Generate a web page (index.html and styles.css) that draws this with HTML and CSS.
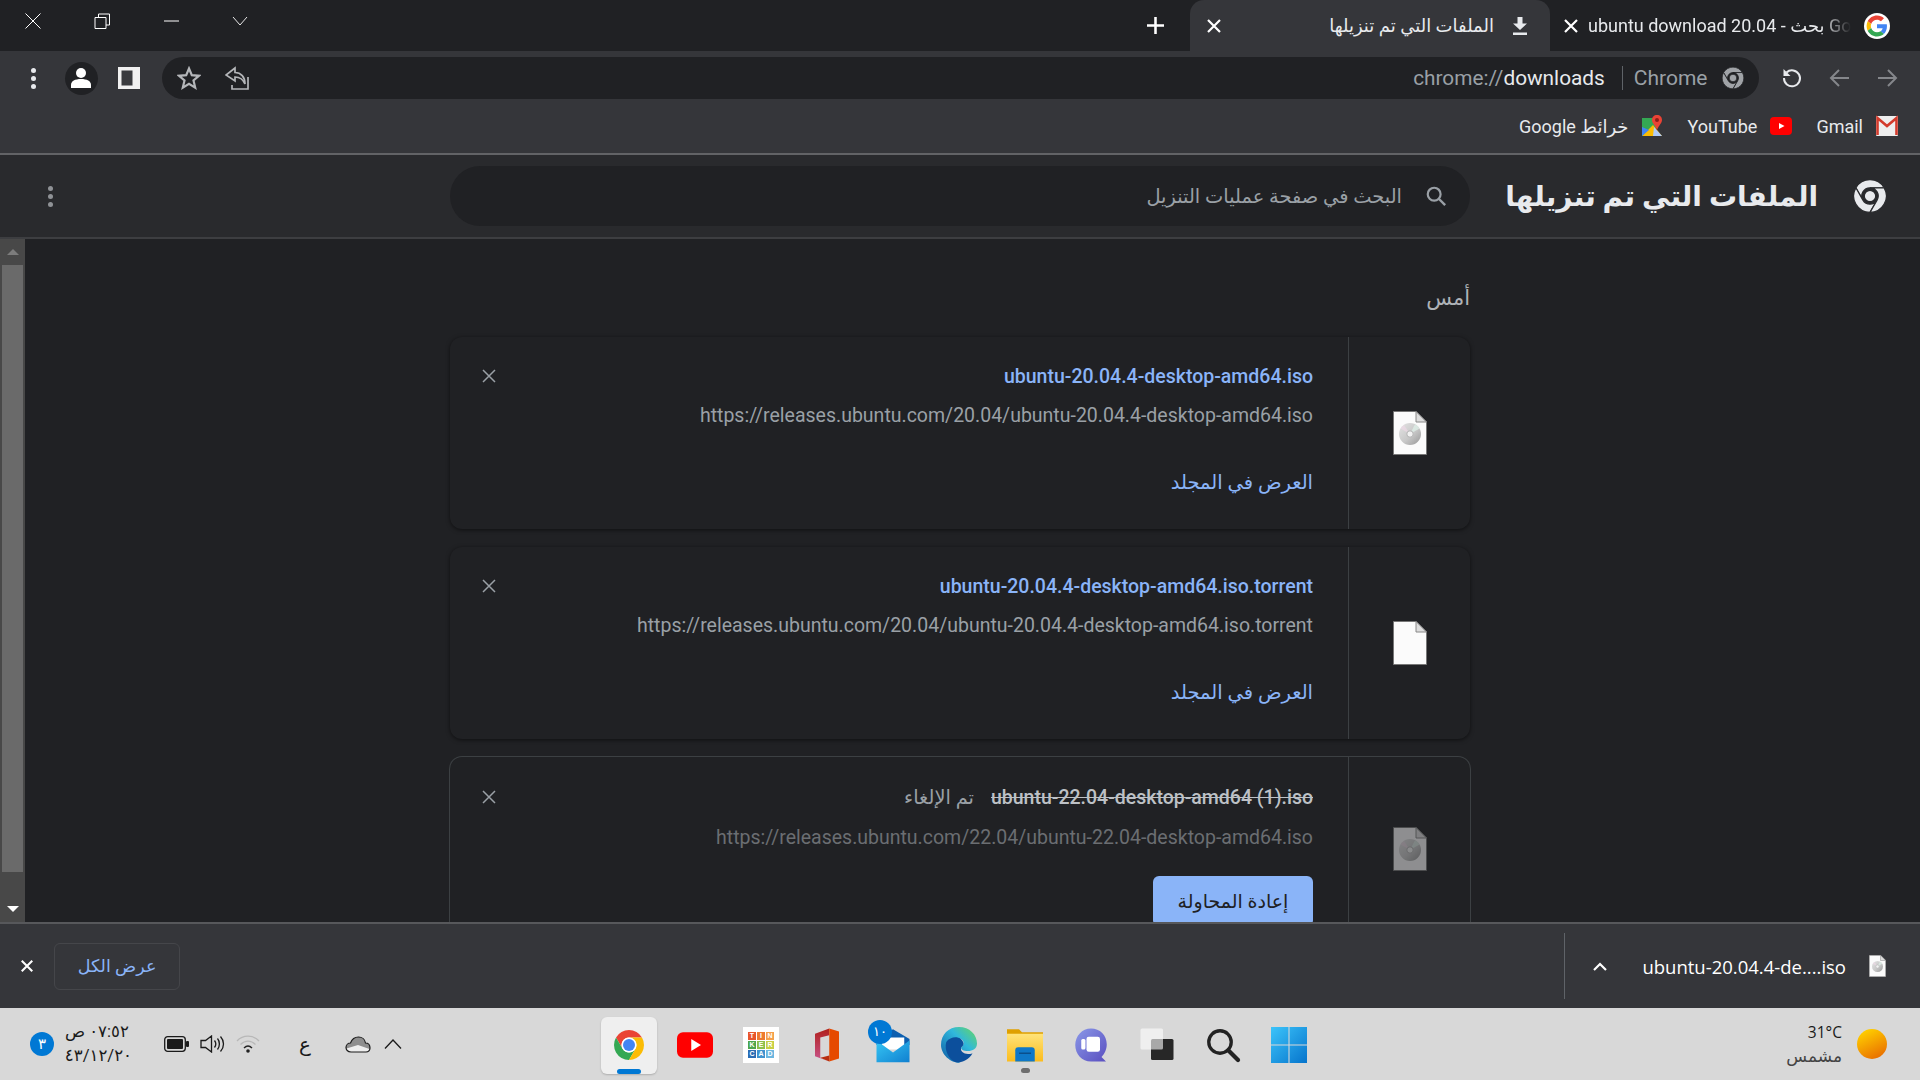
FILE: index.html
```
<!DOCTYPE html>
<html lang="ar" dir="rtl">
<head>
    <meta charset="utf-8">
    <title>الملفات التي تم تنزيلها</title>
    <link rel="stylesheet" href="styles.css">
</head>
<body>
    <!-- Icons -->
    <svg class="defs" width="0" height="0">
        <defs>
            <linearGradient id="discGrad" x1="0" y1="0" x2="1" y2="1">
                <stop offset="0" stop-color="#e4e4e4"/><stop offset=".55" stop-color="#c8c8c8"/><stop offset="1" stop-color="#969696"/>
            </linearGradient>
            <linearGradient id="sunGrad" x1="0.3" y1="0" x2="0.8" y2="1">
                <stop offset="0" stop-color="#ffd000"/><stop offset="1" stop-color="#e86a00"/>
            </linearGradient>
            <linearGradient id="officeGrad" x1="0" y1="0" x2="0" y2="1">
                <stop offset="0" stop-color="#b0201c"/><stop offset="1" stop-color="#c9568f"/>
            </linearGradient>
            <linearGradient id="edgeGrad" x1="0" y1="1" x2="1" y2="0">
                <stop offset="0" stop-color="#0c59a4"/><stop offset=".6" stop-color="#30b8dc"/><stop offset="1" stop-color="#6ad85c"/>
            </linearGradient>
            <linearGradient id="folderGrad" x1="0" y1="0" x2="0" y2="1">
                <stop offset="0" stop-color="#ffe37a"/><stop offset="1" stop-color="#fcbc1c"/>
            </linearGradient>
            <linearGradient id="teamsGrad" x1="0" y1="0" x2="1" y2="1">
                <stop offset="0" stop-color="#8a98e8"/><stop offset="1" stop-color="#5a4fc0"/>
            </linearGradient>
            <linearGradient id="winGrad" x1="0" y1="0" x2="1" y2="1">
                <stop offset="0" stop-color="#3cc4fa"/><stop offset="1" stop-color="#0674cc"/>
            </linearGradient>
            <linearGradient id="mailGrad" x1="0" y1="0" x2="1" y2="1">
                <stop offset="0" stop-color="#36c6f4"/><stop offset="1" stop-color="#1080d0"/>
            </linearGradient>
            <symbol id="chrome-color" viewBox="0 0 48 48">
                <path fill="#ea4335" d="M6.7 14A20 20 0 0 1 41.3 14H24A10 10 0 0 0 15.34 29Z"/>
                <path fill="#34a853" d="M24 44A20 20 0 0 1 6.7 14L15.34 29A10 10 0 0 0 32.66 29Z"/>
                <path fill="#fbbc05" d="M41.3 14A20 20 0 0 1 24 44L32.66 29A10 10 0 0 0 24 14Z"/>
                <circle cx="24" cy="24" r="10" fill="#fff"/>
                <circle cx="24" cy="24" r="8" fill="#4285f4"/>
            </symbol>
            <symbol id="chrome-mono" viewBox="2 2 44 44">
                <path d="M6.7 14A20 20 0 0 1 41.3 14H24A10 10 0 0 0 15.34 29Z"/>
                <path d="M24 44A20 20 0 0 1 6.7 14L15.34 29A10 10 0 0 0 32.66 29Z"/>
                <path d="M41.3 14A20 20 0 0 1 24 44L32.66 29A10 10 0 0 0 24 14Z"/>
                <circle cx="24" cy="24" r="7"/>
            </symbol>
            <symbol id="file-disc" viewBox="0 0 34 44">
                <path fill="#fbfbfb" stroke="#777" d="M.5.5H23L33.5 11V43.5H.5Z"/>
                <path fill="#ddd" stroke="#888" d="M23 .5V11H33.5Z"/>
                <circle cx="17" cy="23" r="11" fill="url(#discGrad)"/>
                <path fill="#dff2ea" opacity=".7" d="M17 23L22 13.200A11 11 0 0 1 26.500 17.500Z"/>
                <path fill="#f0d8e8" opacity=".6" d="M17 23L7.500 17.500A11 11 0 0 1 11 14Z"/>
                <circle cx="17" cy="23" r="3.200" fill="#f2f2f2" stroke="#b4b4b4"/>
            </symbol>
            <symbol id="file-blank" viewBox="0 0 34 44">
                <path fill="#fbfbfb" stroke="#777" d="M.5.5H23L33.5 11V43.5H.5Z"/>
                <path fill="#ddd" stroke="#888" d="M23 .5V11H33.5Z"/>
            </symbol>
            <symbol id="x" viewBox="0 0 16 16">
                <path fill="none" stroke="currentColor" d="M2 2L14 14M14 2L2 14"/>
            </symbol>
        </defs>
    </svg>

    <!-- Tabs -->
    <div class="tabstrip">
        <div class="tab tab-google">
            <svg class="g-logo" viewBox="-6 -6 60 60"><circle cx="24" cy="24" r="30" fill="#fff"/><path fill="#EA4335" d="M24 9.5c3.54 0 6.71 1.22 9.21 3.6l6.85-6.85C35.9 2.38 30.47 0 24 0 14.62 0 6.51 5.38 2.56 13.22l7.98 6.19C12.43 13.72 17.74 9.5 24 9.5z"/><path fill="#4285F4" d="M46.98 24.55c0-1.57-.15-3.09-.38-4.55H24v9.02h12.94c-.58 2.96-2.26 5.48-4.78 7.18l7.73 6c4.51-4.18 7.09-10.36 7.09-17.65z"/><path fill="#FBBC05" d="M10.53 28.59c-.48-1.45-.76-2.99-.76-4.59s.27-3.14.76-4.59l-7.98-6.19C.92 16.46 0 20.12 0 24c0 3.88.92 7.54 2.56 10.78l7.97-6.19z"/><path fill="#34A853" d="M24 48c6.48 0 11.93-2.13 15.89-5.81l-7.73-6c-2.15 1.45-4.92 2.3-8.16 2.3-6.26 0-11.57-4.22-13.47-9.91l-7.98 6.19C6.51 42.62 14.62 48 24 48z"/></svg>
            <span class="tab-title" dir="ltr">ubuntu download 20.04 - بحث Go</span>
            <svg class="tab-close"><use href="#x"/></svg>
        </div>
        <div class="tab tab-active">
            <svg class="tab-dl" viewBox="0 0 16 18"><path fill="#e8eaed" d="M5.5 0H10.5V6.5H15L8 13 1 6.5H5.5ZM1 15.5H15V18H1Z"/></svg>
            <span class="tab-title">الملفات التي تم تنزيلها</span>
            <svg class="tab-close"><use href="#x"/></svg>
        </div>
        <svg class="new-tab" viewBox="0 0 16 16"><path fill="none" stroke="#fff" stroke-width="2.4" d="M8 0V16M0 8H16"/></svg>
        <div class="win-controls">
            <svg viewBox="0 0 16 10" class="win-btn"><path fill="none" stroke="#e8e8e8" d="M1 1L8 9 15 1"/></svg>
            <svg viewBox="0 0 16 16" class="win-btn"><path stroke="#fff" d="M1 8H16"/></svg>
            <svg viewBox="0 0 16 16" class="win-btn"><path fill="none" stroke="#fff" d="M1 4.5H12V15.5H1ZM4.5 4.5V1H15.5V12H12"/></svg>
            <svg viewBox="0 0 16 16" class="win-btn"><path fill="none" stroke="#fff" d="M.5.5L15.5 15.5M15.5.5L.5 15.5"/></svg>
        </div>
    </div>

    <!-- Toolbar -->
    <div class="toolbar">
        <div class="nav-row">
            <svg class="nav-btn dim" viewBox="0 0 24 24"><path fill="none" stroke="currentColor" stroke-width="2" d="M3 12H21M13 4L21 12 13 20"/></svg>
            <svg class="nav-btn dim" viewBox="0 0 24 24"><path fill="none" stroke="currentColor" stroke-width="2" d="M21 12H3M11 4L3 12 11 20"/></svg>
            <svg class="nav-btn" viewBox="0 0 24 24"><path fill="none" stroke="currentColor" stroke-width="2" d="M6.5 6.5A8 8 0 1 1 4 12"/><path fill="currentColor" d="M3.5 3V10H10.5Z"/></svg>
            <div class="omnibox">
                <svg class="omni-chrome"><use href="#chrome-mono"/></svg>
                <span class="omni-site">Chrome</span>
                <span class="omni-sep"></span>
                <span class="omni-url" dir="ltr">chrome://<b>downloads</b></span>
                <svg class="omni-icon omni-share" viewBox="0 0 24 24"><path fill="none" stroke="#b4b6b9" stroke-width="1.7" d="M23 11V23H7V19M10 2L1 9 10 15V11C15 11 18 13 20 18 20 11 16 6.500 10 6.500Z"/></svg>
                <svg class="omni-icon" viewBox="0 0 24 24"><path fill="none" stroke="#b4b6b9" stroke-width="2.2" d="M12 2.500L14.800 9.200 22 9.800 16.500 14.500 18.200 21.600 12 17.800 5.800 21.600 7.500 14.500 2 9.800 9.200 9.200Z"/></svg>
            </div>
            <svg class="tool-icon" viewBox="0 0 22 22"><rect x="0" y="0" width="22" height="22" fill="#f1f1f1"/><rect x="3.500" y="3.500" width="11" height="15" fill="#3a3b3f"/></svg>
            <div class="profile">
                <svg viewBox="0 0 20 22"><circle cx="10" cy="6" r="5" fill="#fff"/><path fill="#fff" d="M0 21V18C0 14 4 12 10 12S20 14 20 18V21Z"/></svg>
            </div>
            <div class="kebab kebab-light"><i></i><i></i><i></i></div>
        </div>
        <div class="bookmarks">
            <a class="bookmark">
                <svg viewBox="0 0 22 20"><rect width="22" height="20" rx="1" fill="#eee"/><path fill="none" stroke="#d33b2c" stroke-width="2.600" d="M1.500 19V2L11 10 20.500 2V19"/></svg>
                <span>Gmail</span>
            </a>
            <a class="bookmark">
                <svg viewBox="0 0 22 20"><rect y="1" width="22" height="18" rx="4" fill="#f00"/><path fill="#fff" d="M9 7L14.500 10 9 13Z"/></svg>
                <span>YouTube</span>
            </a>
            <a class="bookmark">
                <svg viewBox="0 0 22 22"><path fill="#34a853" d="M1 3H15V21H1Z"/><path fill="#fbbc04" d="M1 21L12 10 21 21Z"/><path fill="#4285f4" d="M1 21L1 12 8 15Z"/><path fill="#aecbfa" d="M13 12L21 21H12Z"/><path fill="#ea4335" d="M16 0C19 0 21 2 21 5 21 8 18 10 16 15 14 10 11 8 11 5 11 2 13 0 16 0Z"/><circle cx="16" cy="5" r="2" fill="#8c1d18"/></svg>
                <span>خرائط Google</span>
            </a>
        </div>
    </div>

    <!-- Page header -->
    <header class="page-header">
        <div class="brand">
            <svg class="brand-logo"><use href="#chrome-mono"/></svg>
            <h1>الملفات التي تم تنزيلها</h1>
        </div>
        <div class="search">
            <svg class="search-icon" viewBox="0 0 24 24"><circle cx="10" cy="10" r="7" fill="none" stroke="#9aa0a6" stroke-width="2.400"/><path stroke="#9aa0a6" stroke-width="2.600" d="M15 15L22 22"/></svg>
            <span>البحث في صفحة عمليات التنزيل</span>
        </div>
        <div class="kebab kebab-page"><i></i><i></i><i></i></div>
    </header>

    <!-- Content -->
    <div class="main">
        <div class="downloads">
            <div class="day">أمس</div>

            <div class="card">
                <div class="card-icon"><svg><use href="#file-disc"/></svg></div>
                <div class="card-info">
                    <div class="file-name"><a dir="ltr">ubuntu-20.04.4-desktop-amd64.iso</a></div>
                    <div class="file-url" dir="ltr">https://releases.ubuntu.com/20.04/ubuntu-20.04.4-desktop-amd64.iso</div>
                    <a class="show-folder">العرض في المجلد</a>
                </div>
                <svg class="card-close"><use href="#x"/></svg>
            </div>

            <div class="card">
                <div class="card-icon"><svg><use href="#file-blank"/></svg></div>
                <div class="card-info">
                    <div class="file-name"><a dir="ltr">ubuntu-20.04.4-desktop-amd64.iso.torrent</a></div>
                    <div class="file-url" dir="ltr">https://releases.ubuntu.com/20.04/ubuntu-20.04.4-desktop-amd64.iso.torrent</div>
                    <a class="show-folder">العرض في المجلد</a>
                </div>
                <svg class="card-close"><use href="#x"/></svg>
            </div>

            <div class="card card-cancelled">
                <div class="card-icon"><svg><use href="#file-disc"/></svg></div>
                <div class="card-info">
                    <div class="file-name"><s dir="ltr">ubuntu-22.04-desktop-amd64 (1).iso</s><span class="status">تم الإلغاء</span></div>
                    <div class="file-url" dir="ltr">https://releases.ubuntu.com/22.04/ubuntu-22.04-desktop-amd64.iso</div>
                    <button class="retry">إعادة المحاولة</button>
                </div>
                <svg class="card-close"><use href="#x"/></svg>
            </div>
        </div>
        <div class="scrollbar">
            <svg class="arrow-up" viewBox="0 0 12 6"><path fill="#7c7c7c" d="M6 0L12 6H0Z"/></svg>
            <div class="thumb"></div>
            <svg class="arrow-down" viewBox="0 0 12 6"><path fill="#fff" d="M0 0H12L6 6Z"/></svg>
        </div>
    </div>

    <!-- Download shelf -->
    <div class="shelf">
        <svg class="shelf-file"><use href="#file-disc"/></svg>
        <span class="shelf-name" dir="ltr">ubuntu-20.04.4-de....iso</span>
        <svg class="shelf-chevron" viewBox="0 0 14 9"><path fill="none" stroke="#fff" stroke-width="2.200" d="M1 8L7 2 13 8"/></svg>
        <span class="shelf-sep"></span>
        <button class="show-all">عرض الكل</button>
        <svg class="shelf-close" viewBox="0 0 16 16"><path fill="none" stroke="#fff" stroke-width="2.400" d="M2 2L14 14M14 2L2 14"/></svg>
    </div>

    <!-- Taskbar -->
    <div class="taskbar">
        <div class="weather">
            <svg class="sun" viewBox="0 0 30 30"><circle cx="15" cy="15" r="15" fill="url(#sunGrad)"/></svg>
            <div class="weather-text">
                <div class="temp" dir="ltr">31°C</div>
                <div class="cond">مشمس</div>
            </div>
        </div>
        <div class="apps">
            <div class="app">
                <svg viewBox="2 2 20 20"><path fill="url(#winGrad)" d="M2 2H11.700V11.700H2ZM12.300 2H22V11.700H12.300ZM2 12.300H11.700V22H2ZM12.300 12.300H22V22H12.300Z"/></svg>
            </div>
            <div class="app">
                <svg viewBox="0 0 24 24"><circle cx="10" cy="10" r="7.500" fill="none" stroke="#222" stroke-width="2.200"/><path stroke="#222" stroke-width="2.800" stroke-linecap="round" d="M15.500 15.500L22 22"/></svg>
            </div>
            <div class="app">
                <svg viewBox="0 0 24 24"><rect x="8" y="8" width="15" height="14" rx="1" fill="#272727"/><rect x="1" y="1" width="15" height="14" rx="1" fill="#fff" opacity=".6"/></svg>
            </div>
            <div class="app">
                <svg viewBox="0 0 24 24"><path fill="url(#teamsGrad)" d="M12 1C18 1 22.500 5.500 22.500 11.500 22.500 15 21 18 19 20L22 23H12C6 23 1.500 18 1.500 12 1.500 6 6 1 12 1Z"/><rect x="9" y="6.500" width="9" height="10" rx="1.500" fill="#fff"/><rect x="5.500" y="8" width="2.800" height="7" rx="1" fill="#fff"/></svg>
            </div>
            <div class="app app-running">
                <svg viewBox="0 0 24 24"><path fill="#dfa000" d="M0 1.500H8L10 3.500H24V8H0Z"/><path fill="url(#folderGrad)" d="M0 4.500H24V23H0Z"/><path fill="#0f78c8" d="M5.500 23V15.500Q5.500 13.500 7.500 13.500H16.500Q18.500 13.500 18.500 15.500V23Z"/><path stroke="#0a4f8c" stroke-width="1" d="M8 17.500H16"/></svg>
            </div>
            <div class="app">
                <svg viewBox="0 0 24 24"><path fill="url(#edgeGrad)" d="M12 0C19 0 24 5 24 11 24 14.500 21 16 18 16 15 16 13 15 13.500 13.500 16 12 15.500 8 12 7.500 7 7 4 11 4.500 15 5 20 10 23 13 24 6 24 0 18 0 12 0 5 5 0 12 0Z"/><path fill="#0c4f9c" d="M3.500 10C7 5.500 14 6 15 11 15 12.500 14 13 13.500 13.500 12.500 16 15 18 18 18 19 18 20 18 21 17.500 18.500 22 14 24 10 23.500 5 22 2 15 3.500 10Z"/></svg>
            </div>
            <div class="app">
                <svg viewBox="0 0 24 24"><path fill="#0d5fb0" d="M12 1.500L23 8V12H1V8Z"/><path fill="#fff" d="M4.500 7H19.500V15H4.500Z"/><path fill="url(#mailGrad)" d="M1 9L12 17 23 9V23.500H1Z"/></svg>
                <span class="mail-badge">١٠</span>
            </div>
            <div class="app">
                <svg viewBox="0 0 24 24"><path fill="url(#officeGrad)" d="M13.500 1L4 4.500V19.500L13.500 23 7.500 20.500V7L13.500 5.500Z"/><path fill="#e64a00" d="M13.500 1L20 3V21L13.500 23Z"/><path fill="#b82e10" d="M7.500 20.500L13.500 19V23Z"/></svg>
            </div>
            <div class="app">
                <div class="tinkercad">
                    <span class="tk1">T</span><span class="tk2">I</span><span class="tk3">N</span>
                    <span class="tk4">K</span><span class="tk5">E</span><span class="tk6">R</span>
                    <span class="tk7">C</span><span class="tk8">A</span><span class="tk9">D</span>
                </div>
            </div>
            <div class="app">
                <svg viewBox="0 0 24 24"><rect x="0" y="3.500" width="24" height="17" rx="4" fill="#f00"/><path fill="#fff" d="M9.500 8L16 12 9.500 16Z"/></svg>
            </div>
            <div class="app app-active">
                <svg><use href="#chrome-color"/></svg>
            </div>
        </div>
        <div class="tray">
            <svg class="tray-chevron" viewBox="0 0 18 10"><path fill="none" stroke="#1a1a1a" stroke-width="1.300" d="M1 9.500L9 1 17 9.500"/></svg>
            <svg class="tray-cloud" viewBox="0 0 26 17"><path fill="#8e8e8e" d="M6 16C2.500 16 1 13.500 1 11.500 1 9 3 7 5.500 7 7 3 10 1 13.500 1 17 1 20 3.500 20.500 7 23.500 7 25 9 25 12 25 14 23.500 16 21 16Z"/><path fill="#eee" d="M6 16C3 16 1.500 14 1.500 12.500L13 9 24.500 13C24 15 22.500 16 21 16Z"/><path fill="none" stroke="#1a1a1a" stroke-width="1.200" d="M6 16C2.500 16 1 13.500 1 11.500 1 9 3 7 5.500 7 7 3 10 1 13.500 1 17 1 20 3.500 20.500 7 23.500 7 25 9 25 12 25 14 23.500 16 21 16Z"/></svg>
            <span class="tray-lang">ع</span>
            <svg class="tray-wifi" viewBox="0 0 24 18"><path fill="none" stroke="#b8b8b8" stroke-width="1.300" d="M1 6C7-.5 17-.5 23 6M4.500 9.500C9 5 15 5 19.500 9.500"/><path fill="none" stroke="#222" stroke-width="1.400" d="M8 13C10.500 10.500 13.500 10.500 16 13"/><circle cx="12" cy="16" r="1.800" fill="#222"/></svg>
            <svg class="tray-sound" viewBox="0 0 25 18"><path fill="none" stroke="#1a1a1a" stroke-width="1.300" d="M1 5.500H5.500L11.500 1V17L5.500 12.500H1ZM14.500 5.500C16 7.500 16 10.500 14.500 12.500M17.500 3.500C20 6.500 20 11.500 17.500 14.500M20.500 1.500C24.500 6 24.500 12 20.500 16.500"/></svg>
            <svg class="tray-battery" viewBox="0 0 25 16"><rect x=".7" y=".7" width="20.600" height="14.600" rx="3" fill="none" stroke="#1a1a1a" stroke-width="1.300"/><rect x="3" y="3" width="16" height="10" rx="1" fill="#1a1a1a"/><rect x="22" y="5" width="3" height="6" rx="1" fill="#1a1a1a"/></svg>
            <div class="clock">
                <div>٠٧:٥٢ ص</div>
                <div>٤٣/١٢/٢٠</div>
            </div>
            <span class="notif">٣</span>
        </div>
    </div>
</body>
</html>
```

FILE: styles.css
```
/* General */
* {
    margin: 0;
    padding: 0;
    box-sizing: border-box;
}

html, body {
    width: 1920px;
    height: 1080px;
    overflow: hidden;
}

body {
    display: flex;
    flex-direction: column;
    background-color: #202124;
    color: #e8eaed;
    font-family: Roboto, "DejaVu Sans", sans-serif;
}

.defs {
    position: absolute;
}

svg {
    display: block;
    flex-shrink: 0;
}

/* Tabs */
.tabstrip {
    display: flex;
    align-items: center;
    height: 51px;
    flex-shrink: 0;
    background-color: #202124;
}

.tab {
    display: flex;
    align-items: center;
    height: 51px;
    font-size: 18px;
}

.tab-title {
    white-space: nowrap;
}

.tab-close {
    width: 16px;
    height: 16px;
    color: #fff;
    stroke-width: 2.200;
}

.tab-google {
    width: 370px;
    padding-right: 30px;
}

.g-logo {
    width: 26px;
    height: 26px;
    margin-left: 13px;
}

.tab-google .tab-title {
    width: 263px;
    -webkit-mask-image: linear-gradient(to left, transparent, #000 30px);
    mask-image: linear-gradient(to left, transparent, #000 30px);
}

.tab-google .tab-close {
    margin-right: 9px;
}

.tab-active {
    position: relative;
    width: 360px;
    padding-right: 22px;
    background-color: #35363a;
    border-radius: 14px 14px 0 0;
}

.tab-dl {
    width: 16px;
    height: 18px;
    margin-left: 18px;
}

.tab-active .tab-title {
    width: 272px;
}

.new-tab {
    width: 17px;
    height: 17px;
    margin-right: 26px;
}

.win-controls {
    display: flex;
    align-items: center;
    margin-right: auto;
    padding-left: 25px;
    gap: 53px;
    height: 42px;
    align-self: flex-start;
}

.win-btn {
    width: 16px;
    height: 16px;
}

/* Toolbar */
.toolbar {
    height: 104px;
    flex-shrink: 0;
    background-color: #35363a;
    border-bottom: 2px solid #626366;
}

.nav-row {
    display: flex;
    align-items: center;
    height: 54px;
    padding: 0 21px 0 0;
}

.nav-btn {
    width: 24px;
    height: 24px;
    margin-left: 23.500px;
    color: #e8eaed;
}

.nav-btn.dim {
    color: #85878b;
}

.omnibox {
    display: flex;
    align-items: center;
    width: 1597px;
    height: 42px;
    margin-right: -2px;
    padding: 0 14px 0 15px;
    background-color: #202124;
    border-radius: 21px;
}

.omni-chrome {
    width: 24px;
    height: 24px;
    margin-left: 13px;
    color: #a0a3a7;
    fill: currentColor;
    stroke: #202124;
    stroke-width: 1.500;
}

.omni-site {
    color: #9aa0a6;
    font-size: 21px;
}

.omni-sep {
    width: 1px;
    height: 24px;
    margin: 0 11px 0 17px;
    background-color: #5f6368;
}

.omni-url {
    color: #9aa0a6;
    font-size: 20.800px;
}

.omni-url b {
    color: #e8eaed;
    font-weight: 400;
}

.omni-icon {
    width: 24px;
    height: 24px;
    margin-right: 24px;
}

.omni-share {
    margin-right: auto;
}

.tool-icon {
    width: 22px;
    height: 22px;
    margin-right: 22px;
}

.profile {
    display: flex;
    align-items: center;
    justify-content: center;
    width: 33px;
    height: 33px;
    margin-right: 20px;
    border-radius: 50%;
    background-color: #202124;
}

.profile svg {
    width: 20px;
    height: 22px;
}

.kebab {
    display: flex;
    flex-direction: column;
    gap: 3px;
    width: 5px;
}

.kebab i {
    width: 5px;
    height: 5px;
    border-radius: 50%;
    background-color: #e8eaed;
}

.kebab-light {
    margin-right: 29px;
}

.kebab-page {
    margin-right: auto;
    margin-left: 48px;
}

.kebab-page i {
    background-color: #8f9296;
}

.bookmarks {
    display: flex;
    align-items: center;
    height: 42px;
    padding-right: 22px;
    gap: 24px;
    font-size: 18px;
}

.bookmark {
    display: flex;
    align-items: center;
    gap: 13px;
    color: #e8eaed;
}

.bookmark svg {
    width: 22px;
    height: 22px;
}

/* Page header */
.page-header {
    display: flex;
    align-items: center;
    height: 84px;
    flex-shrink: 0;
    background-color: #292a2d;
    border-bottom: 2px solid #3d3e41;
}

.brand {
    display: flex;
    align-items: center;
    width: 450px;
    padding-right: 32px;
    gap: 34px;
}

.brand-logo {
    width: 36px;
    height: 36px;
    color: #e8eaed;
    fill: currentColor;
    stroke: #292a2d;
    stroke-width: 1.500;
}

h1 {
    font-size: 28px;
    font-weight: 700;
    white-space: nowrap;
}

.search {
    display: flex;
    align-items: center;
    width: 1020px;
    height: 60px;
    padding-right: 23px;
    gap: 23px;
    background-color: #202124;
    border-radius: 30px;
    color: #9aa0a6;
    font-size: 19.400px;
}

.search-icon {
    width: 22px;
    height: 22px;
}

/* Content */
.main {
    display: flex;
    flex: 1;
    min-height: 0;
    overflow: hidden;
}

.downloads {
    flex: 1;
    padding: 46px 450px 0 0;
}

.day {
    height: 26px;
    margin-bottom: 26px;
    color: #aeb2b7;
    font-size: 21px;
    line-height: 26px;
}

.card {
    display: flex;
    width: 1020px;
    height: 192px;
    margin-bottom: 18px;
    border-radius: 12px;
    background-color: #202124;
    box-shadow: 0 1px 4px rgba(0, 0, 0, 0.55);
}

.card-icon {
    display: flex;
    align-items: center;
    justify-content: center;
    width: 122px;
    border-left: 1px solid #3c4043;
}

.card-icon svg {
    width: 34px;
    height: 44px;
}

.card-info {
    flex: 1;
    padding: 28px 35px 0 0;
    font-size: 19.500px;
    line-height: 24px;
}

.file-name {
    font-weight: 500;
    color: #8ab4f8;
    white-space: nowrap;
}

.file-url {
    margin-top: 15px;
    color: #9aa0a6;
    text-align: right;
    white-space: nowrap;
}

.show-folder {
    display: block;
    margin-top: 43px;
    color: #8ab4f8;
    font-size: 19.500px;
}

.card-close {
    width: 16px;
    height: 16px;
    margin: 31px 0 0 31px;
    color: #9aa0a6;
    stroke-width: 1.500;
}

.card-cancelled {
    box-shadow: 0 0 0 1px #3c4043;
}

.card-cancelled .card-icon {
    padding-bottom: 8px;
}

.card-cancelled .card-icon svg {
    opacity: 0.5;
}

.card-cancelled .card-info {
    padding-top: 29px;
}

.card-cancelled .file-name {
    color: #bdc1c6;
}

.card-cancelled .file-name s {
    unicode-bidi: isolate;
}

.status {
    margin-right: 17px;
    color: #9aa0a6;
    font-size: 19.400px;
    font-weight: 400;
}

.card-cancelled .file-url {
    margin-top: 16px;
    color: #6b6e72;
}

.retry {
    display: block;
    width: 160px;
    height: 50px;
    margin-top: 26px;
    border: none;
    border-radius: 6px;
    background-color: #8ab4f8;
    color: #202124;
    font-family: inherit;
    font-size: 19px;
}

.card-cancelled .card-close {
    margin-top: 32px;
}

.scrollbar {
    display: flex;
    flex-direction: column;
    align-items: center;
    width: 25px;
    flex-shrink: 0;
    background-color: #484848;
}

.arrow-up {
    width: 12px;
    height: 6px;
    margin: 10px 0 10px;
}

.thumb {
    width: 21px;
    height: 607px;
    background-color: #6a6a6a;
}

.arrow-down {
    width: 12px;
    height: 6px;
    margin-top: 34px;
}

/* Download shelf */
.shelf {
    display: flex;
    align-items: center;
    height: 86px;
    flex-shrink: 0;
    padding: 0 34px 0 20px;
    background-color: #35363a;
    border-top: 2px solid #57585b;
}

.shelf-file {
    width: 17px;
    height: 22px;
}

.shelf-name {
    margin-right: 23px;
    color: #fff;
    font-family: "Open Sans", sans-serif;
    font-size: 18.500px;
    white-space: nowrap;
}

.shelf-chevron {
    width: 14px;
    height: 9px;
    margin-right: 35px;
}

.shelf-sep {
    width: 1px;
    height: 66px;
    margin-right: 28px;
    background-color: #5f6368;
}

.show-all {
    width: 126px;
    height: 47px;
    margin-right: auto;
    border: 1px solid #45464a;
    border-radius: 6px;
    background: none;
    color: #8ab4f8;
    font-family: inherit;
    font-size: 17.500px;
}

.shelf-close {
    width: 14px;
    height: 14px;
    margin-right: 20px;
}

/* Taskbar */
.taskbar {
    display: grid;
    grid-template-columns: 1fr auto 1fr;
    align-items: center;
    height: 72px;
    flex-shrink: 0;
    background-color: #d8d8d8;
    color: #1a1a1a;
}

.weather {
    display: flex;
    align-items: center;
    padding-right: 33px;
    gap: 15px;
}

.sun {
    width: 30px;
    height: 30px;
}

.temp {
    font-family: "Open Sans", sans-serif;
    font-size: 15.500px;
    line-height: 24px;
    text-align: right;
}

.cond {
    color: #444;
    font-size: 17px;
    line-height: 24px;
}

.apps {
    display: flex;
    padding: 2px 2px 0 0;
}

.app {
    position: relative;
    display: flex;
    align-items: center;
    justify-content: center;
    width: 66px;
    height: 57px;
}

.app svg {
    width: 36px;
    height: 36px;
}

.app-active::before {
    content: "";
    position: absolute;
    top: 0;
    bottom: 0;
    left: 5px;
    right: 5px;
    border-radius: 6px;
    background-color: #efefef;
    box-shadow: 0 1px 2px rgba(0, 0, 0, 0.2);
}

.app-active svg {
    position: relative;
}

.app-active::after {
    content: "";
    position: absolute;
    bottom: 0;
    left: 21px;
    width: 24px;
    height: 5px;
    border-radius: 3px;
    background-color: #0078d4;
}

.app-running::after {
    content: "";
    position: absolute;
    bottom: 1px;
    left: 29px;
    width: 9px;
    height: 5px;
    border-radius: 3px;
    background-color: #6e6e6e;
}

.mail-badge {
    position: absolute;
    top: 3px;
    right: 34px;
    width: 24px;
    height: 24px;
    border-radius: 50%;
    background-color: #0078d4;
    color: #fff;
    font-size: 13px;
    line-height: 24px;
    text-align: center;
}

.tinkercad {
    display: grid;
    grid-template-columns: repeat(3, 1fr);
    gap: 1px;
    width: 36px;
    height: 36px;
    padding: 5px;
    background-color: #fff;
    color: #fff;
    font-family: "Liberation Sans", sans-serif;
    font-size: 7px;
    font-weight: 700;
    line-height: 8px;
    text-align: center;
    direction: ltr;
}

.tk1 { background-color: #e8552d; }
.tk2 { background-color: #ee7a30; }
.tk3 { background-color: #f5a04a; }
.tk4 { background-color: #4da64d; }
.tk5 { background-color: #8dc04a; }
.tk6 { background-color: #c8d043; }
.tk7 { background-color: #2a6db5; }
.tk8 { background-color: #3f93cf; }
.tk9 { background-color: #6cb6e0; }

.tray {
    display: flex;
    align-items: center;
    justify-content: flex-start;
    padding-left: 30px;
    direction: ltr;
}

.notif {
    order: 0;
    width: 24px;
    height: 24px;
    margin-right: 11px;
    border-radius: 50%;
    background-color: #0078d4;
    color: #fff;
    font-size: 15px;
    line-height: 24px;
    text-align: center;
}

.clock {
    order: 1;
    width: 67px;
    font-size: 16.600px;
    line-height: 24px;
    text-align: left;
    direction: rtl;
    white-space: nowrap;
}

.tray-battery {
    order: 2;
    width: 25px;
    height: 16px;
    margin-left: 32px;
}

.tray-sound {
    order: 3;
    width: 25px;
    height: 18px;
    margin-left: 11px;
}

.tray-wifi {
    order: 4;
    width: 24px;
    height: 18px;
    margin-left: 11px;
}

.tray-lang {
    order: 5;
    width: 20px;
    margin-left: 35px;
    font-size: 20px;
    text-align: center;
}

.tray-cloud {
    order: 6;
    width: 26px;
    height: 17px;
    margin-left: 29.500px;
}

.tray-chevron {
    order: 7;
    width: 18px;
    height: 10px;
    margin-left: 13px;
}
```
